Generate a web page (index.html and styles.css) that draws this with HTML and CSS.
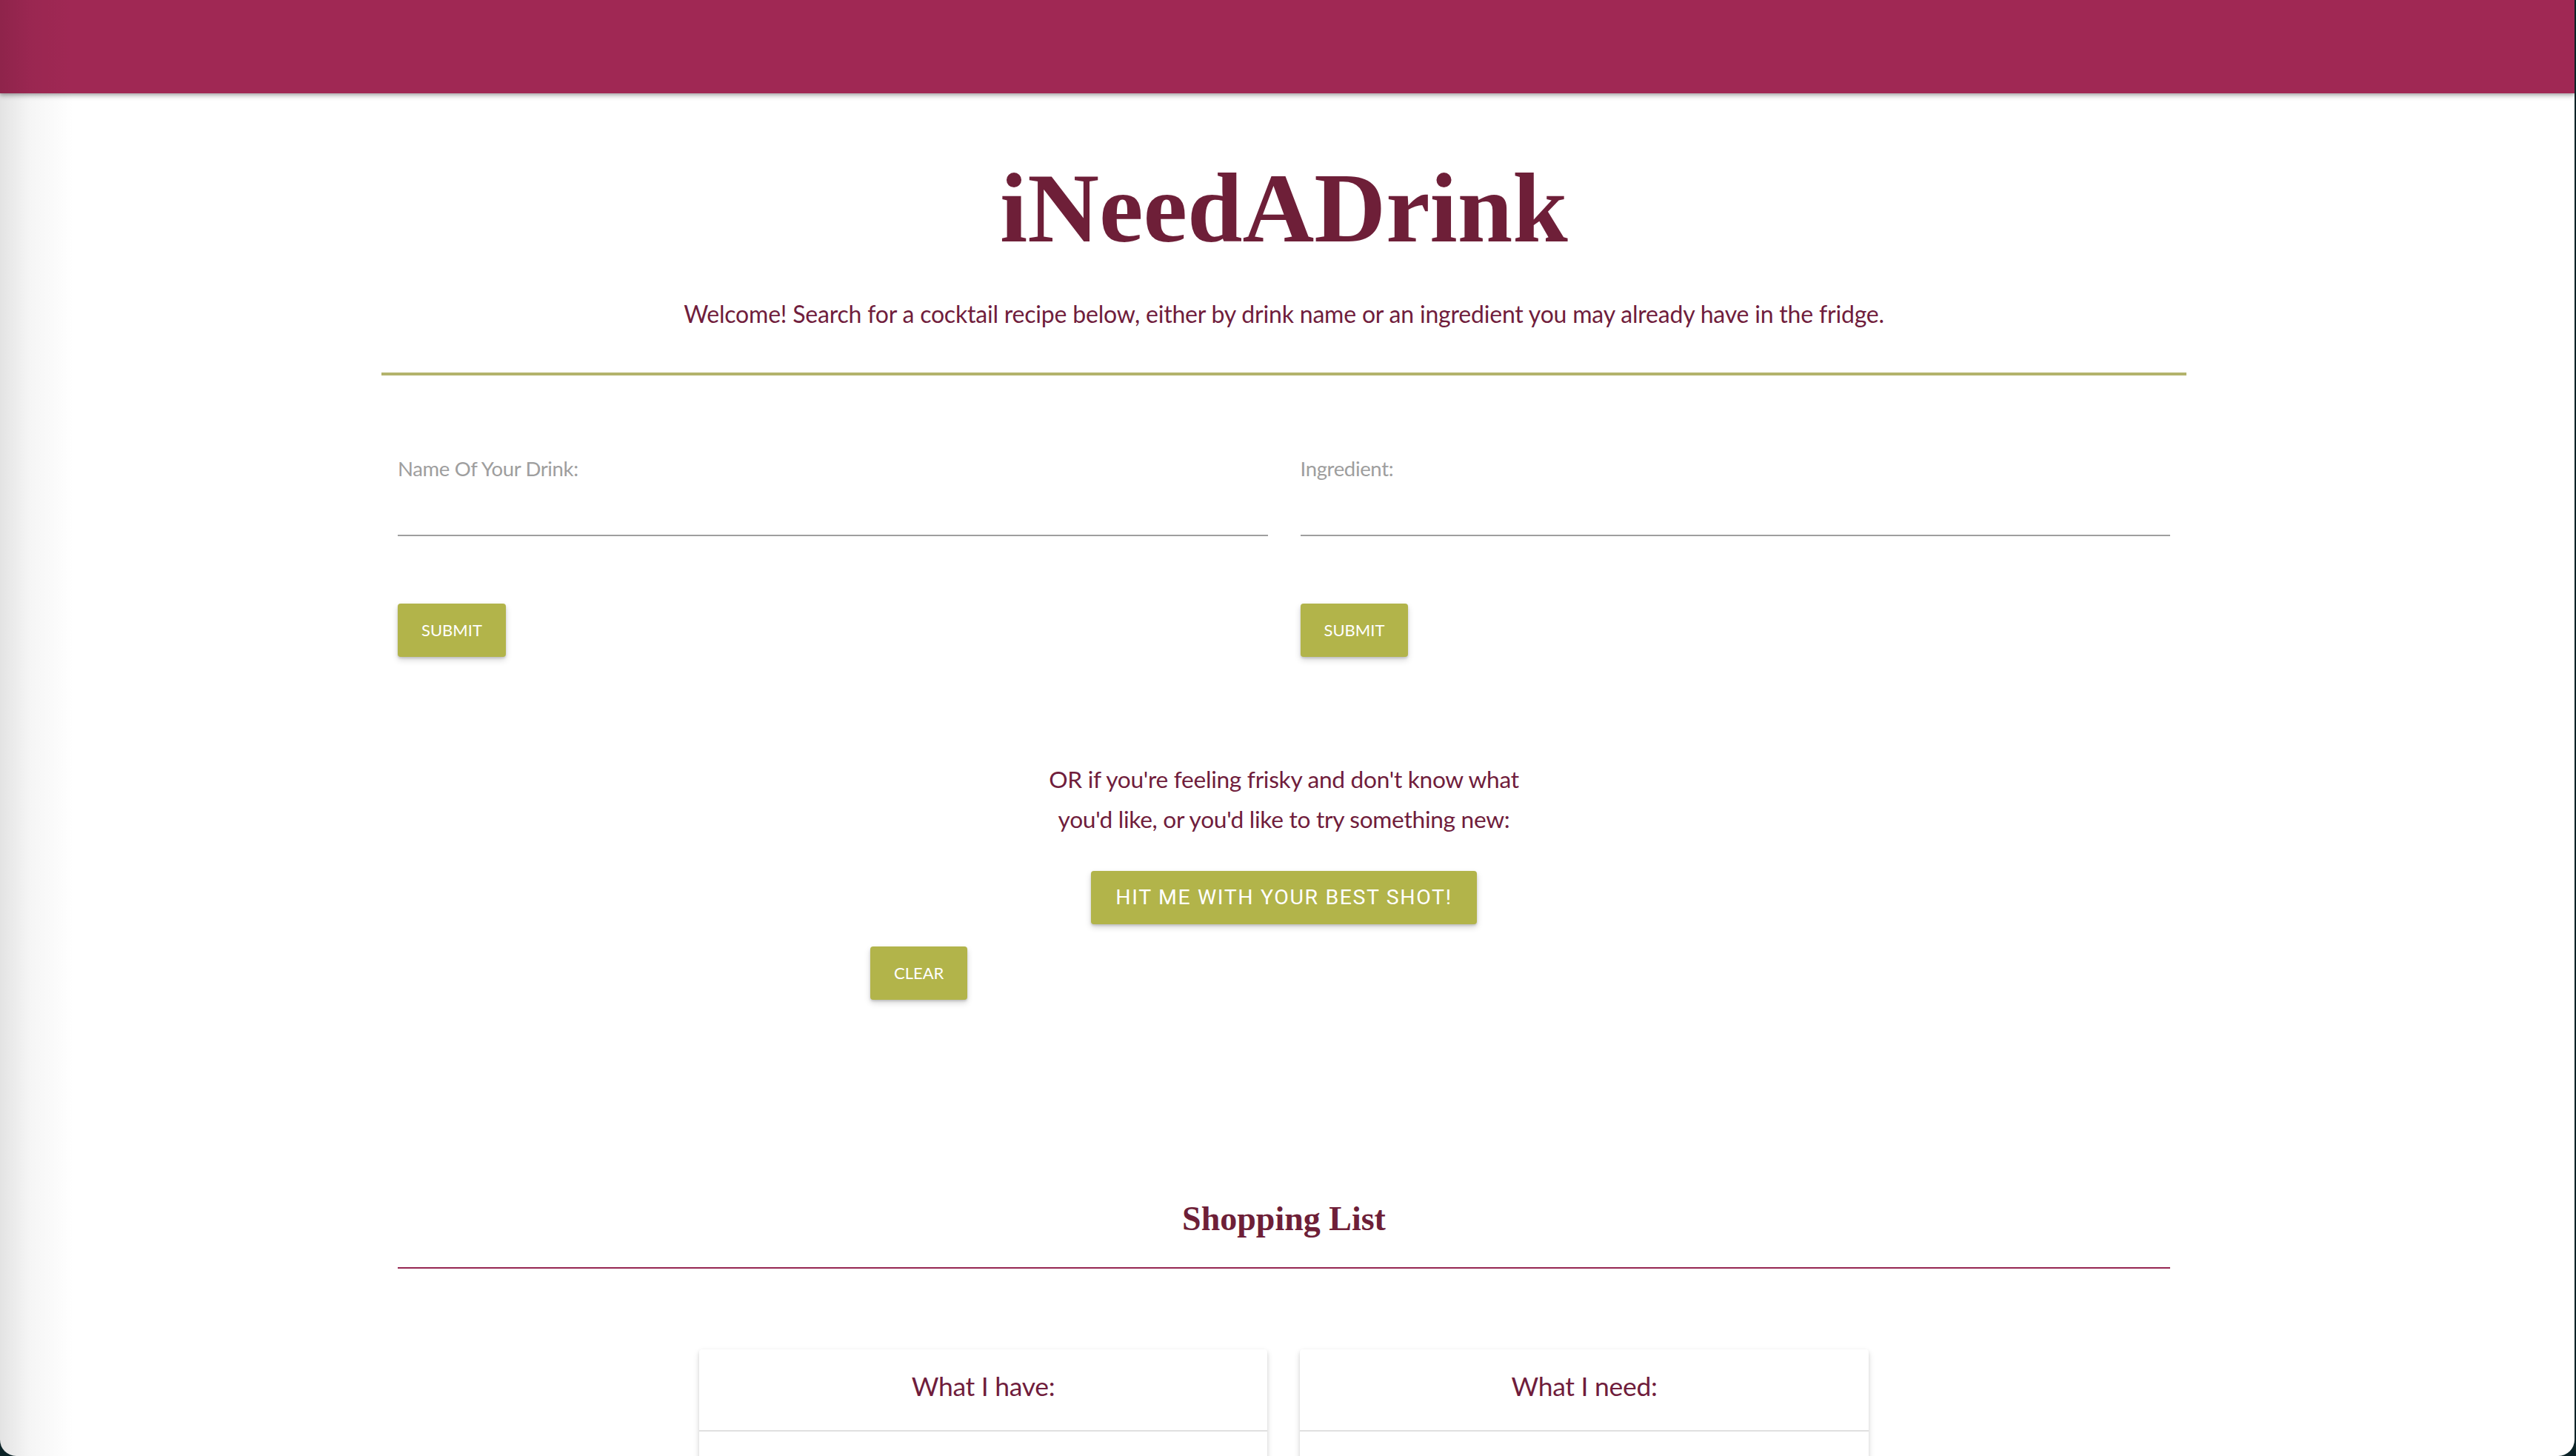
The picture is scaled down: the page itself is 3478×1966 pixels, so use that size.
FILE: index.html
```html
<!DOCTYPE html>
<html lang="en">
<head>
<meta charset="utf-8">
<title>iNeedADrink</title>
<link rel="stylesheet" href="styles.css">
</head>
<body>
<div class="window">
  <nav class="topbar"></nav>
  <main class="container">
    <h1 class="title">iNeedADrink</h1>
    <p class="intro">Welcome! Search for a cocktail recipe below, either by drink name or an ingredient you may already have in the fridge.</p>
    <hr class="rule-green">
    <div class="search-row">
      <div class="search-col">
        <label class="field-label" for="drink">Name Of Your Drink:</label>
        <input class="field-input" id="drink" type="text">
        <button class="btn">Submit</button>
      </div>
      <div class="search-col">
        <label class="field-label" for="ingredient">Ingredient:</label>
        <input class="field-input" id="ingredient" type="text">
        <button class="btn">Submit</button>
      </div>
    </div>
    <p class="random-text">OR if you're feeling frisky and don't know what<br>you'd like, or you'd like to try something new:</p>
    <div class="random-row">
      <button class="btn btn-random">Hit me with your best shot!</button>
    </div>
    <div class="clear-row">
      <button class="btn">Clear</button>
    </div>
    <section class="shopping">
      <h2 class="shopping-title">Shopping List</h2>
      <hr class="rule-maroon">
      <div class="cards">
        <div class="card">
          <div class="card-head">What I have:</div>
          <div class="card-body"></div>
        </div>
        <div class="card">
          <div class="card-head">What I need:</div>
          <div class="card-body"></div>
        </div>
      </div>
    </section>
  </main>
  <div class="edge-shade"></div>
</div>
</body>
</html>
```

FILE: styles.css
```css
html, body {
  margin: 0;
  padding: 0;
  height: 100%;
  overflow: hidden;
  background: #0b2327;
}

.window {
  position: relative;
  width: 3476px;
  height: 1966px;
  background: #ffffff;
  border-radius: 0 0 22px 22px;
  overflow: hidden;
  font-family: Lato, "Noto Sans", sans-serif;
  color: #701d3c;
}

.topbar {
  height: 126px;
  background: #a02854;
  box-shadow: 0 4px 6px rgba(0, 0, 0, 0.22), 0 2px 3px rgba(0, 0, 0, 0.12);
  position: relative;
  z-index: 2;
}

.edge-shade {
  position: absolute;
  left: 0;
  top: 0;
  bottom: 0;
  width: 100px;
  background: linear-gradient(to right, rgba(0, 0, 0, 0.11), rgba(0, 0, 0, 0.04) 40%, rgba(0, 0, 0, 0));
  pointer-events: none;
  z-index: 5;
}

.container {
  width: 2437px;
  margin-left: 515px;
}

.title {
  margin: 75px 0 0;
  font-family: "Liberation Serif", "Times New Roman", serif;
  font-weight: 700;
  font-size: 134px;
  line-height: 160.8px;
  text-align: center;
  color: #6e1f38;
}

.intro {
  margin: 39px 0 0;
  font-size: 32px;
  line-height: 46px;
  letter-spacing: -0.2px;
  text-align: center;
}

.rule-green {
  margin: 56px 0 0;
  border: 0;
  height: 4px;
  background: #b3b36c;
}

.search-row {
  display: grid;
  grid-template-columns: 1fr 1fr;
  column-gap: 44px;
  padding: 0 22px;
  margin-top: 110px;
}

.search-col {
  display: flex;
  flex-direction: column;
  align-items: flex-start;
}

.field-label {
  font-size: 27.5px;
  line-height: 31.2px;
  letter-spacing: -0.35px;
  color: #9e9e9e;
}

.field-input {
  align-self: stretch;
  box-sizing: border-box;
  height: 76px;
  margin: 0;
  padding: 0;
  border: 0;
  border-bottom: 2px solid #9e9e9e;
  background: transparent;
  outline: none;
  font: inherit;
}

.btn {
  height: 72px;
  padding: 0 32px;
  border: 0;
  border-radius: 4px;
  background: #b2b44a;
  color: #ffffff;
  font-family: Lato, "Noto Sans", sans-serif;
  font-size: 22px;
  line-height: 72px;
  text-transform: uppercase;
  box-shadow: 0 4px 8px rgba(0, 0, 0, 0.16), 0 2px 3px rgba(0, 0, 0, 0.14);
  cursor: pointer;
}

.search-col .btn {
  margin-top: 91px;
}

.random-text {
  margin: 138px 0 0;
  font-size: 31.7px;
  line-height: 54px;
  letter-spacing: -0.3px;
  text-align: center;
}

.random-row {
  display: flex;
  justify-content: center;
  margin-top: 43px;
}

.btn-random {
  font-family: Roboto, "Liberation Sans", sans-serif;
  font-size: 28.5px;
  letter-spacing: 1.6px;
  padding: 0 33px;
}

.clear-row {
  margin-top: 30px;
  padding-left: 660px;
}

.shopping {
  margin-top: 268px;
  padding: 0 22px;
}

.shopping-title {
  margin: 0;
  font-family: "Liberation Serif", "Times New Roman", serif;
  font-weight: 700;
  font-size: 46px;
  line-height: 55.2px;
  text-align: center;
  color: #6e1f38;
}

.rule-maroon {
  margin: 38px 0 0;
  border: 0;
  height: 2px;
  background: #952652;
}

.cards {
  display: grid;
  grid-template-columns: 767px 768px;
  column-gap: 44px;
  padding-left: 407px;
  margin-top: 109px;
}

.card {
  background: #ffffff;
  border-radius: 4px;
  box-shadow: 0 4px 10px rgba(0, 0, 0, 0.12), 0 2px 4px rgba(0, 0, 0, 0.1);
}

.card-head {
  padding: 30px 0 38px;
  font-size: 35.5px;
  line-height: 40.8px;
  letter-spacing: -0.3px;
  text-align: center;
  border-bottom: 2px solid #e0e0e0;
}

.card-body {
  height: 240px;
}
```
